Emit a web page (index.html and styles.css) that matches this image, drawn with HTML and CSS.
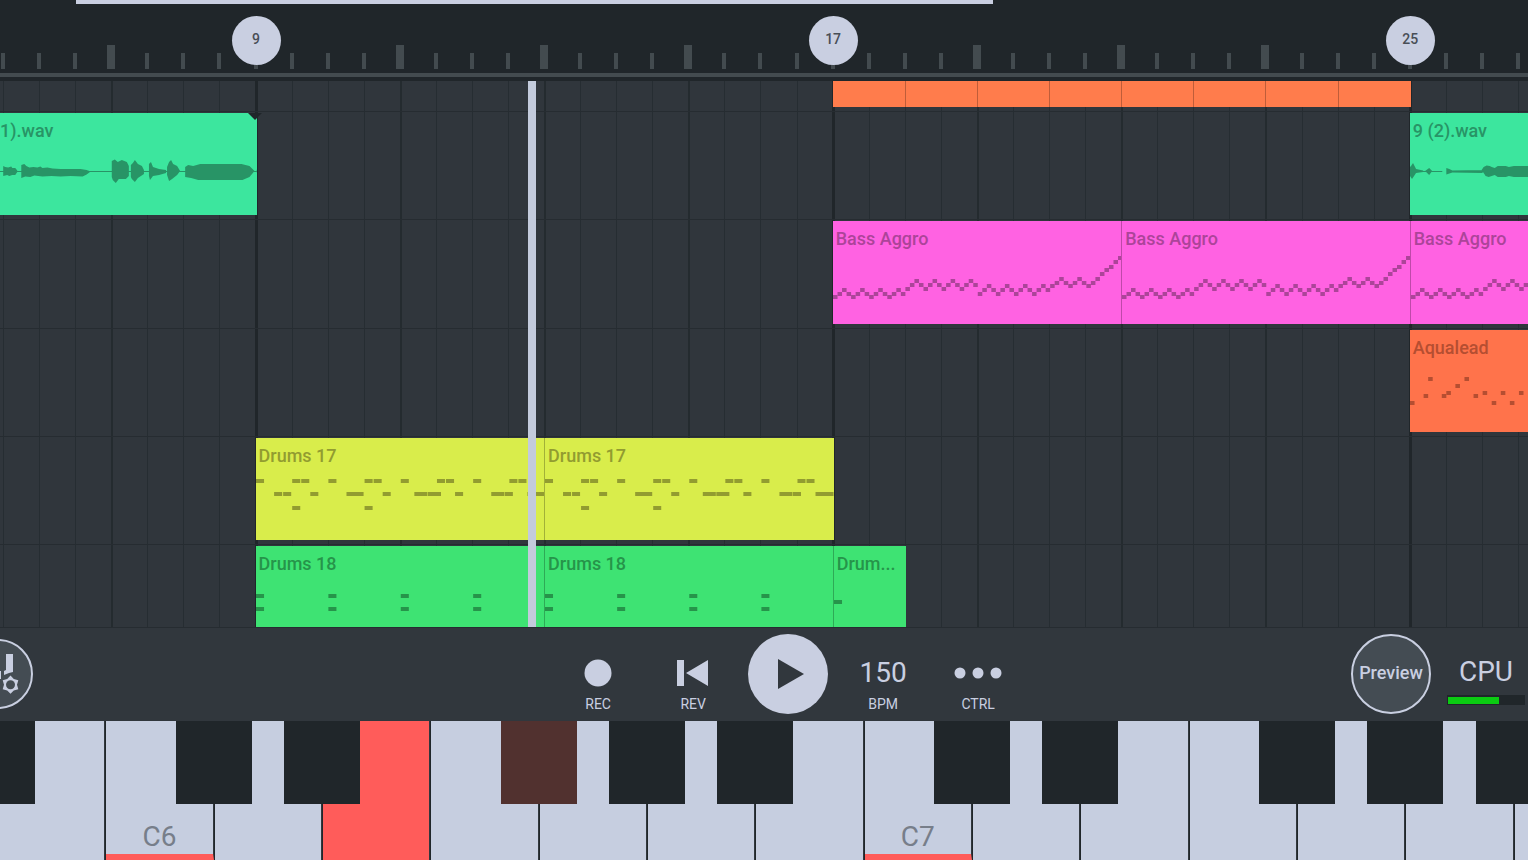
FILE: index.html
```html
<!DOCTYPE html>
<html lang="en">
<head>
  <meta charset="UTF-8" />
  <meta name="viewport" content="width=device-width, initial-scale=1" />
  <title>Playlist</title>
  <link rel="stylesheet" href="styles.css">
</head>
<body>

  <header class="ruler">
    <div class="scroll-thumb"></div>
    <div class="timeline ticks" id="ticks"></div>
  </header>

  <main class="playlist">
    <div class="timeline grid-lines" id="gridLines"></div>
    <div class="tracks" id="tracks"></div>
    <div class="playhead"></div>
  </main>

  <section class="transport">
    <button class="round instrument" aria-label="Instrument settings">
      <svg width="70" height="70" viewBox="0 0 70 70">
        <path d="M43 15h7v18l-4 1-5 2v-4l2-1zM33 32h5v8h-5zM20 15h8v24h-8z"/>
        <path d="M47.500 36.500l3.300 3.400 4.500 1.300-1.300 4.500 1.300 4.500-4.500 1.200-3.300 3.400-3.300-3.400-4.500-1.200 1.300-4.500-1.300-4.500 4.500-1.300z"/>
        <circle class="hole" cx="47.500" cy="45.700" r="4.500"/>
      </svg>
    </button>

    <div class="controls">
      <button class="control">
        <svg width="48" height="28" viewBox="0 0 48 28"><circle cx="24" cy="14" r="13.500"/></svg>
        <span>REC</span>
      </button>
      <button class="control">
        <svg width="48" height="28" viewBox="0 0 48 28"><path d="M8 1h7v26H8zM39 1v26L17 14z"/></svg>
        <span>REV</span>
      </button>
      <button class="play" aria-label="Play">
        <svg width="80" height="80" viewBox="0 0 80 80"><path d="M30 25v30l26-15z"/></svg>
      </button>
      <button class="control">
        <strong>150</strong>
        <span>BPM</span>
      </button>
      <button class="control">
        <svg width="48" height="28" viewBox="0 0 48 28"><circle cx="6" cy="14" r="5.500"/><circle cx="24" cy="14" r="5.500"/><circle cx="42" cy="14" r="5.500"/></svg>
        <span>CTRL</span>
      </button>
    </div>

    <div class="status">
      <button class="round preview">Preview</button>
      <div class="cpu">
        <span>CPU</span>
        <div class="meter"><div class="meter-level"></div></div>
      </div>
    </div>
  </section>

  <section class="keyboard">
    <div class="keys" id="keys"></div>
  </section>

  <script src="script.js"></script>
</body>
</html>
```

FILE: styles.css
```css
* {
  box-sizing: border-box;
}

body {
  margin: 0;
  height: 100vh;
  display: grid;
  grid-template-rows: 81px minmax(0, 1fr) 94px 139px;
  overflow: hidden;
  background-color: #31373d;
  color: #c9cfe1;
  font-family: Roboto, "Open Sans", sans-serif;
}

button {
  margin: 0;
  padding: 0;
  border: none;
  background: none;
  color: inherit;
  font: inherit;
  cursor: pointer;
}

svg {
  display: block;
}

/* 44 half-bar columns, the outer ones run past the window */
.timeline {
  display: grid;
  grid-template-columns: repeat(44, minmax(0, 1fr));
  margin: 0 -26px 0 -33px;
}

/* Ruler */
.ruler {
  display: flex;
  flex-direction: column;
  background-color: #20262a;
  overflow: hidden;
}

.scroll-thumb {
  width: 60%;
  height: 4px;
  margin-left: 5%;
  background-color: #c9cfe1;
}

.ticks {
  height: 73px;
  border-bottom: 4px solid #434b4f;
}

.tick-cell {
  position: relative;
  display: flex;
  align-items: flex-end;
  padding-bottom: 4px;
}

.tick {
  width: 4px;
  height: 16px;
  margin-left: -2px;
  background-color: #434b4f;
  flex-shrink: 0;
}

.tick.major {
  width: 8px;
  height: 24px;
  margin-left: -4px;
}

.marker {
  position: absolute;
  top: 12px;
  left: -24px;
  width: 49px;
  height: 49px;
  border-radius: 50%;
  background-color: #c9cfe1;
  color: #484e56;
  font-size: 14px;
  font-weight: 500;
  line-height: 46px;
  text-align: center;
}

/* Playlist */
.playlist {
  position: relative;
  display: grid;
  grid-template: minmax(0, 1fr) / minmax(0, 1fr);
  overflow: hidden;
  background-color: #30363c;
}

.grid-lines,
.tracks {
  grid-area: 1 / 1;
}

.line {
  border-left: 1px solid #262d32;
}

.line.major {
  border-left: 2px solid #242b2f;
}

.line.bar {
  border-left: 3px solid #20262a;
  margin-left: -1px;
}

.tracks {
  display: grid;
  grid-template-rows: 30px repeat(4, minmax(0, 1fr)) 83px;
}

.track {
  padding: 1px 0 4px;
  border-top: 1px solid #262c31;
}

.track:first-child {
  padding-top: 0;
  border-top: none;
}

.track:last-child {
  padding-bottom: 0;
}

.clip {
  position: relative;
  display: grid;
  grid-template: minmax(0, 1fr) / minmax(0, 1fr);
  margin-right: -1px;
  min-height: 0;
}

.clip.joined {
  border-left: 1px solid rgba(0, 0, 0, 0.25);
}

.clip-name {
  grid-area: 1 / 1;
  padding-left: 3px;
  font-size: 18px;
  font-weight: 500;
  line-height: 36px;
  white-space: nowrap;
}

/* clip that starts before the visible part of the timeline */
.clip.scrolled .clip-name {
  padding-left: 33px;
}

.clip svg {
  grid-area: 1 / 1;
  width: 100%;
  height: 103px;
  fill: currentColor;
}

.clip.fade::after {
  content: "";
  position: absolute;
  top: 0;
  right: -5px;
  border: 7px solid transparent;
  border-top-color: #20262a;
  border-bottom: none;
}

.orange { background-color: #ff7c4c; }
.mint { background-color: #3ce69e; color: #289466; }
.pink { background-color: #ff62e2; color: #ac4499; }
.coral { background-color: #ff734b; color: #b54e31; }
.yellow { background-color: #d9ed4b; color: #929c30; }
.green { background-color: #3ee373; color: #26944a; }

.playhead {
  position: absolute;
  top: 0;
  bottom: 0;
  left: 34.55%;
  width: 8px;
  background-color: #c3cbdc;
}

/* Transport */
.transport {
  display: grid;
  grid-template-columns: 22fr auto 13fr auto;
  align-items: center;
  padding-bottom: 2px;
  overflow: hidden;
  border-top: 1px solid #262c31;
}

.round {
  border: 2px solid #c9cfe1;
  border-radius: 50%;
  background-color: #444c53;
}

.instrument {
  width: 70px;
  height: 70px;
  margin-left: -37px;
}

.instrument svg {
  margin: -2px;
  fill: #c9cfe1;
}

.instrument .hole {
  fill: #444c53;
}

.controls {
  display: grid;
  grid-template-columns: repeat(5, 95px);
  align-items: center;
  justify-items: center;
}

.control {
  display: flex;
  flex-direction: column;
  align-items: center;
  gap: 8px;
  padding-top: 24px;
  font-size: 14px;
  line-height: 18px;
}

.control svg {
  fill: #c9cfe1;
}

.control strong {
  font-size: 28px;
  font-weight: 400;
  line-height: 28px;
}

.play {
  width: 80px;
  height: 80px;
  border-radius: 50%;
  background-color: #c9cfe1;
}

.play svg {
  fill: #31373d;
}

.status {
  grid-column: 4;
  display: flex;
  gap: 16px;
  padding-right: 3px;
}

.preview {
  width: 80px;
  height: 80px;
  padding-bottom: 2px;
  font-size: 18px;
  font-weight: 500;
}

.cpu {
  display: flex;
  flex-direction: column;
  justify-content: center;
  gap: 6px;
  width: 78px;
  padding-top: 12px;
  font-size: 28px;
  line-height: 34px;
  text-align: center;
}

.meter {
  height: 10px;
  padding: 2px 1px 1px;
  background-color: #20262a;
}

.meter-level {
  width: 67%;
  height: 7px;
  background-color: #0bcb12;
}

/* Keyboard */
.keyboard {
  display: grid;
  overflow: hidden;
  background-color: #20262a;
}

.keys {
  display: grid;
  grid-template-columns: repeat(15, minmax(0, 1fr));
  margin: 0 -94px 0 -3px;
}

.key {
  position: relative;
  display: grid;
  padding-left: 1px;
}

.white {
  display: flex;
  align-items: flex-end;
  justify-content: center;
  background-color: #c6cee0;
  border-right: 1px solid #31373d;
  color: #777e8a;
  font-size: 28px;
  line-height: 34px;
}

.white.root {
  border-bottom: 6px solid #ff5c5a;
}

.white.pressed {
  background-color: #ff5c5a;
}

.black {
  position: absolute;
  top: 0;
  left: -35%;
  z-index: 1;
  width: 70%;
  height: 60%;
  background-color: #20262a;
}

.black.pressed {
  background-color: #51312f;
}
```

FILE: script.js
```js
const COLUMNS = 44;
const COLUMN_WIDTH = 36;
const STEP = 4.5;

// Bass pattern: top of each of the 64 notes
const bass = [
  74, 71, 67, 71, 74, 71, 67, 71, 74, 71, 67, 71, 74, 71, 67, 71,
  66, 62, 58, 62, 66, 62, 58, 62, 66, 62, 58, 62, 66, 62, 58, 62,
  71, 67, 63, 67, 71, 67, 63, 67, 71, 67, 63, 67, 71, 67, 63, 67,
  63, 60, 56, 60, 63, 60, 56, 60, 63, 60, 56, 51, 47, 44, 39, 35
].map((y, step) => [step, 4.5, y]);

const lead = [
  [0, 71], [3, 64], [4, 47], [7, 64], [8, 61], [10, 54], [12, 47],
  [14, 64], [16, 61], [18, 71], [20, 61], [22, 71], [24, 61]
].map(([step, y]) => [step, 4.5, y]);

const drums17 = [
  ...[0, 8, 10, 16, 24, 26, 32, 40, 42, 48, 56, 58].map(step => [step, 8, 41]),
  ...[4, 6, 12, 28, 44, 55].map(step => [step, 8, 54]),
  [20, 17, 54], [35, 13, 54], [38, 13, 54], [52, 13, 54], [60, 18, 54],
  [8, 8, 68], [24, 8, 68]
];

const drums18 = [0, 16, 32, 48].flatMap(step => [[step, 8, 48], [step, 8, 61]]);

const wave1 = `M0 58h288v1H0z
  M36 53l2 1 3 .5 3-1 1 1.500h3l2 2.500v1.500l-2 3h-3l-3 1-2-1-4 1z
  M54 52l3-1 2 2 3 1.500 4-.5 4 .5 3-1 2 1.500 5-.5 5 1 8 .5h20l6 1 4 1.500-4 3-4 2-12-.5-10 .5-9-.5-9 .5-8-1-4 1.500-5-.5-4 1.500z
  M144 48l3-1.500 3 2.500 4-2 5 2 2 4v10l-3 3h-7l-3 4-3-3-1-3z
  M163 52l2-2 2-3 3 4 4 2 2 4v4l-3 2-3 2-3 4-3-3-1-2z
  M181 51l2-2 2 5 6 2 7 1v3l-7 2-6 1-3 4-1-4z
  M199 54l2-5 2-2 2 4 4 2 3 5-3 4-5 4-3 2-2-6z
  M217 54l3-2 5 1 7-2h41l8 2 5 5-5 6-7 3h-44l-7-2-6-1z
  M288 58l1-4v9z`;

const wave2 = `M0 58h32v1H0zM36 58h40v1H36z
  M0 54l1-1 2-3 2 4 1 2 7 1.500v1.500l-7 1-2 3-2 3-2-3z
  M15 58l4-3 3 3-3 4z
  M36 55l3 1 3 1.500 30-.5v3l-30-.5-3 1-3 1z
  M71 57l2-3 3-1.500 3 .5 2 1 3 1 3-2h8l3 1 5-1h40v11h-40l-5-1-3 1h-8l-3-2-3 1-3 1-3-1-2-3z`;

const tracks = [
  Array.from({ length: 8 }, (_, i) => ({ color: 'orange', start: 24 + i * 2, span: 2 })),
  [
    { name: '1).wav', color: 'mint scrolled fade', start: 0, span: 8, wave: wave1 },
    { name: '9 (2).wav', color: 'mint', start: 40, span: 4, wave: wave2 }
  ],
  [
    { name: 'Bass Aggro', color: 'pink', start: 24, span: 8, notes: bass },
    { name: 'Bass Aggro', color: 'pink', start: 32, span: 8, notes: bass },
    { name: 'Bass Aggro', color: 'pink', start: 40, span: 4, notes: bass }
  ],
  [
    { name: 'Aqualead', color: 'coral', start: 40, span: 4, notes: lead }
  ],
  [
    { name: 'Drums 17', color: 'yellow', start: 8, span: 8, notes: drums17 },
    { name: 'Drums 17', color: 'yellow', start: 16, span: 8, notes: drums17 }
  ],
  [
    { name: 'Drums 18', color: 'green', start: 8, span: 8, notes: drums18 },
    { name: 'Drums 18', color: 'green', start: 16, span: 8, notes: drums18 },
    { name: 'Drum...', color: 'green', start: 24, span: 2, notes: [[0, 8, 54]] }
  ]
];

// Ruler and vertical grid
const markers = { 8: 9, 24: 17, 40: 25 };
let ticksHtml = '';
let linesHtml = '';
for (let i = 0; i < COLUMNS; i++) {
  const major = i % 4 === 0 && !markers[i] ? 'major' : '';
  const marker = markers[i] ? `<span class="marker">${markers[i]}</span>` : '';
  ticksHtml += `<div class="tick-cell"><div class="tick ${major}"></div>${marker}</div>`;
  linesHtml += `<div class="line ${markers[i] ? 'bar' : major}"></div>`;
}
document.getElementById('ticks').innerHTML = ticksHtml;
document.getElementById('gridLines').innerHTML = linesHtml;

// Clips
function drawContent(clip) {
  if (!clip.wave && !clip.notes) return '';
  const shapes = clip.wave
    ? `<path d="${clip.wave}"/>`
    : clip.notes.map(([step, width, y]) => `<rect x="${step * STEP}" y="${y}" width="${width}" height="4"/>`).join('');
  return `<svg viewBox="0 0 ${clip.span * COLUMN_WIDTH} 103" preserveAspectRatio="none">${shapes}</svg>`;
}

document.getElementById('tracks').innerHTML = tracks.map(clips => {
  const items = clips.map((clip, i) => {
    const prev = clips[i - 1];
    const joined = prev && prev.start + prev.span === clip.start ? 'joined' : '';
    const name = clip.name ? `<span class="clip-name">${clip.name}</span>` : '';
    return `<div class="clip ${clip.color} ${joined}" style="grid-column: ${clip.start + 1} / span ${clip.span}">${name}${drawContent(clip)}</div>`;
  }).join('');
  return `<div class="timeline track">${items}</div>`;
}).join('');

// Keyboard, from B5 up to B7
const notes = ['B5', 'C6', 'D6', 'E6', 'F6', 'G6', 'A6', 'B6', 'C7', 'D7', 'E7', 'F7', 'G7', 'A7', 'B7'];
const pressed = ['E6', 'Gb6'];
document.getElementById('keys').innerHTML = notes.map(note => {
  const root = note[0] === 'C';
  const flat = note[0] + 'b' + note[1];
  const black = 'DEGAB'.includes(note[0])
    ? `<button class="black ${pressed.includes(flat) ? 'pressed' : ''}" aria-label="${flat}"></button>`
    : '';
  return `<div class="key">
    <button class="white ${root ? 'root' : ''} ${pressed.includes(note) ? 'pressed' : ''}" aria-label="${note}">${root ? note : ''}</button>
    ${black}
  </div>`;
}).join('');
```
